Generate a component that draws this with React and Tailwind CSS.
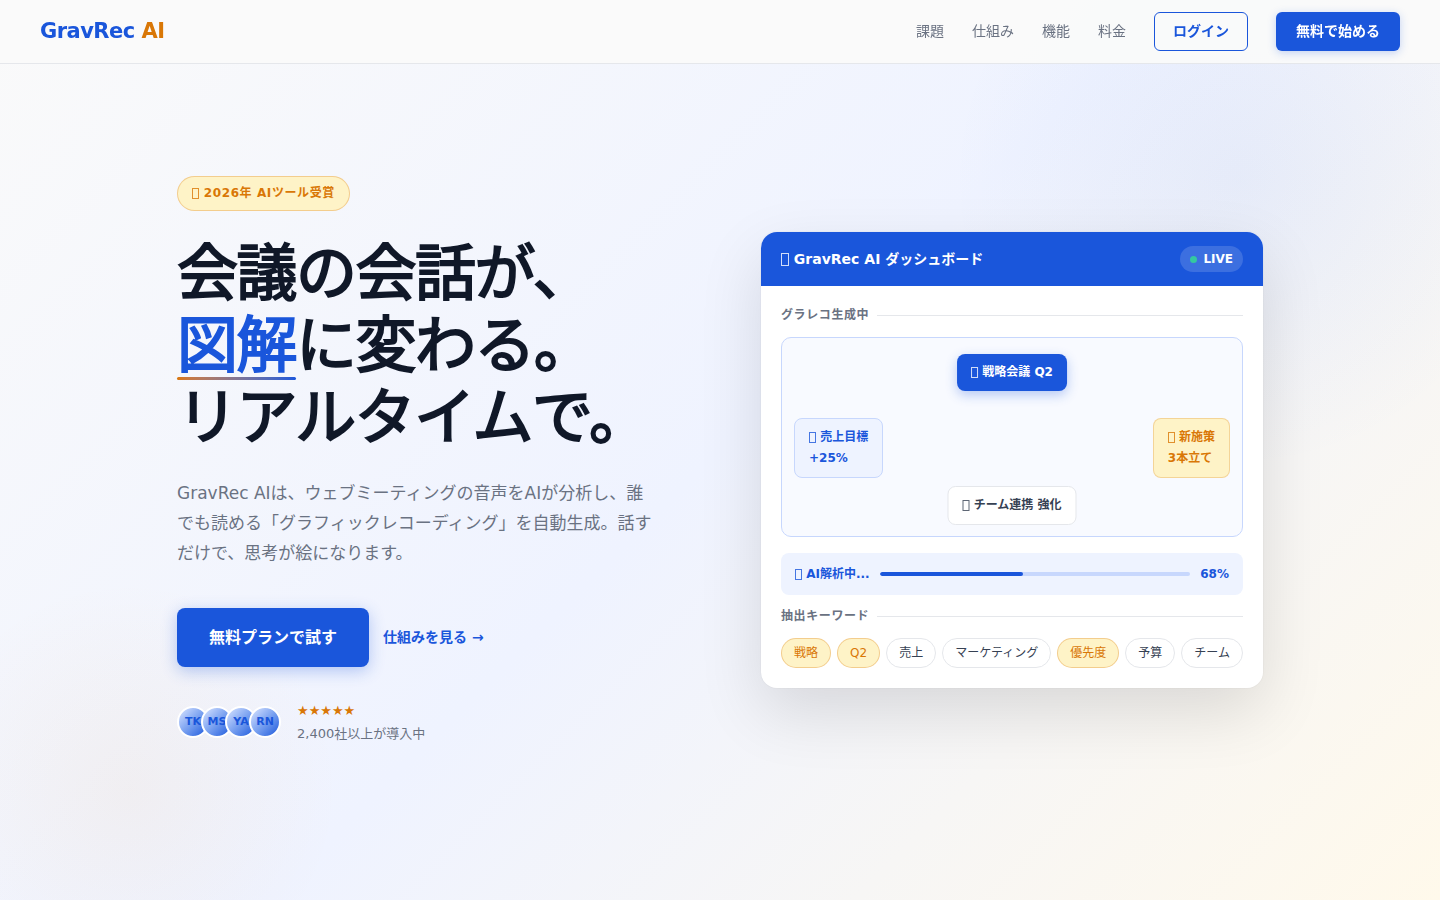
import React from 'react'

const navLinks = ['課題', '仕組み', '機能', '料金']

const members = ['TK', 'MS', 'YA', 'RN']

const keywords = [
  { label: '戦略', hot: true },
  { label: 'Q2', hot: true },
  { label: '売上' },
  { label: 'マーケティング' },
  { label: '優先度', hot: true },
  { label: '予算' },
  { label: 'チーム' },
]

// small outlined box used as the leading mark of labels
function Mark({ large }) {
  return (
    <span
      aria-hidden="true"
      className={`inline-block border border-current opacity-80 ${
        large ? 'h-[13px] w-2 align-[-2px]' : 'h-[11px] w-[7px] align-[-2px]'
      }`}
    />
  )
}

function Navbar() {
  return (
    <header className="fixed inset-x-0 top-0 z-10 flex h-16 items-center justify-between border-b border-gray-200 bg-[#fafafa]/95 px-10">
      <a href="#top" className="text-[21px] leading-[35px] font-bold tracking-tight text-[#1a56db]">
        GravRec <span className="text-[#d97706]">AI</span>
      </a>
      <nav className="flex items-center gap-7 text-sm leading-[23px]">
        {navLinks.map((label) => (
          <a key={label} href={`#${label}`} className="text-gray-500 hover:text-[#1a56db]">
            {label}
          </a>
        ))}
        <button className="rounded-md border border-[#1a56db] px-[18px] py-[7px] font-semibold text-[#1a56db]">
          ログイン
        </button>
        <button className="rounded-md bg-[#1a56db] px-5 py-2 font-semibold text-white shadow-[0_2px_8px_rgba(26,86,219,0.25)]">
          無料で始める
        </button>
      </nav>
    </header>
  )
}

function HeroCopy() {
  return (
    <div>
      <div className="mb-[27px] inline-block rounded-full border border-[#d97706]/30 bg-[#fef3c7] px-3.5 py-1.5 text-xs leading-[21px] font-bold tracking-wider text-[#d97706]">
        <Mark /> 2026年 AIツール受賞
      </div>
      <h1 className="mb-6 text-[61px] leading-[72px] font-normal tracking-tight whitespace-nowrap text-gray-900 [-webkit-text-stroke:2px_currentColor]">
        会議の会話が、
        <br />
        <span className="relative inline-block text-[#1a56db]">
          図解
          <span className="absolute inset-x-0 bottom-0.5 h-[3px] rounded-sm bg-linear-to-r from-[#d97706] to-[#1a56db]" />
        </span>
        に変わる。
        <br />
        リアルタイムで。
      </h1>
      <p className="mb-10 max-w-[480px] text-[17px] leading-[30px] text-gray-500">
        GravRec AIは、ウェブミーティングの音声をAIが分析し、誰でも読める「グラフィックレコーディング」を自動生成。話すだけで、思考が絵になります。
      </p>
      <div className="mb-8 flex items-center gap-3.5">
        <button className="rounded-lg bg-[#1a56db] px-8 py-4 text-base leading-[27px] font-bold text-white shadow-[0_4px_16px_rgba(26,86,219,0.3)]">
          無料プランで試す
        </button>
        <a href="#how" className="text-sm leading-6 font-semibold text-[#1a56db]">
          仕組みを見る →
        </a>
      </div>
      <div className="flex items-center gap-4">
        <div className="flex -space-x-2">
          {members.map((name) => (
            <div
              key={name}
              className="flex size-8 items-center justify-center rounded-full border-2 border-white bg-linear-135 from-[#dbe5fe] to-[#1a56db] text-[11px] leading-[18px] font-bold text-[#1a56db]"
            >
              {name}
            </div>
          ))}
        </div>
        <div>
          <div className="text-[13px] leading-6 text-[#d97706]">★★★★★</div>
          <div className="text-[13px] leading-[22px] text-gray-500">2,400社以上が導入中</div>
        </div>
      </div>
    </div>
  )
}

function SectionLabel({ children }) {
  return (
    <div className="mb-3 flex items-center gap-2 text-xs leading-[19px] font-semibold tracking-wider text-gray-500">
      {children}
      <span className="h-px flex-1 bg-gray-200" />
    </div>
  )
}

// nodes sit freely on the recording canvas
function GraphicCanvas() {
  return (
    <div className="relative mb-4 h-[200px] rounded-[10px] border border-[#c7d7fd] bg-[#f8faff] text-xs leading-[21px] font-semibold whitespace-nowrap">
      <div className="absolute top-4 left-1/2 -translate-x-1/2 rounded-lg bg-[#1a56db] px-3.5 py-2 text-white shadow-[0_4px_12px_rgba(26,86,219,0.3)]">
        <Mark /> 戦略会議 Q2
      </div>
      <div className="absolute top-20 left-3 rounded-lg border border-[#c7d7fd] bg-[#eef3ff] px-3.5 py-2 text-[#1a56db]">
        <Mark /> 売上目標
        <br />
        +25%
      </div>
      <div className="absolute top-20 right-3 rounded-lg border border-[#d97706]/25 bg-[#fef3c7] px-3.5 py-2 text-[#d97706]">
        <Mark /> 新施策
        <br />
        3本立て
      </div>
      <div className="absolute bottom-[11px] left-1/2 -translate-x-1/2 rounded-lg border border-gray-200 bg-white px-3.5 py-2 text-gray-700">
        <Mark /> チーム連携 強化
      </div>
    </div>
  )
}

function Dashboard() {
  return (
    <section className="overflow-hidden rounded-2xl bg-white shadow-[0_24px_64px_rgba(0,0,0,0.12),0_0_0_1px_rgba(0,0,0,0.02)]">
      <div className="flex items-center justify-between bg-[#1a56db] px-5 py-3.5 text-white">
        <h2 className="text-sm leading-6 font-bold">
          <Mark large /> GravRec AI ダッシュボード
        </h2>
        <div className="flex items-center gap-1.5 rounded-full bg-white/15 px-2.5 py-1 text-xs leading-[18px] font-semibold">
          <span className="size-[7px] rounded-full bg-[#34c8a0]" />
          LIVE
        </div>
      </div>
      <div className="p-5">
        <SectionLabel>グラレコ生成中</SectionLabel>
        <GraphicCanvas />
        <div className="mb-3 flex items-center gap-2.5 rounded-lg bg-[#eef3ff] px-3.5 py-2.5 text-xs leading-[22px] font-semibold text-[#1a56db]">
          <span>
            <Mark /> AI解析中...
          </span>
          <div className="h-1 flex-1 overflow-hidden rounded-full bg-[#c7d7fd]">
            <div className="h-full w-[46%] rounded-full bg-[#1a56db]" />
          </div>
          <span>68%</span>
        </div>
        <SectionLabel>抽出キーワード</SectionLabel>
        <div className="flex flex-wrap justify-between gap-x-1 gap-y-1.5">
          {keywords.map(({ label, hot }) => (
            <span
              key={label}
              className={`rounded-full border px-3 py-1 text-xs leading-5 ${
                hot
                  ? 'border-[#d97706]/30 bg-[#fef3c7] text-[#d97706]'
                  : 'border-gray-200 bg-white text-gray-700'
              }`}
            >
              {label}
            </span>
          ))}
        </div>
      </div>
    </section>
  )
}

export default function App() {
  return (
    <div
      id="top"
      lang="ja"
      className="font-['DejaVu_Sans','Noto_Sans_CJK_JP',sans-serif] text-gray-900"
    >
      <Navbar />
      <main className="flex min-h-screen items-center justify-center bg-[radial-gradient(circle_at_1240px_180px,rgba(26,86,219,0.06),transparent_290px),radial-gradient(circle_at_130px_790px,rgba(217,119,6,0.05),transparent_210px),linear-gradient(135deg,#fafafa_0%,#eff3ff_50%,#fff9eb_100%)] px-10 pt-[100px] pb-20">
        <div className="grid w-full max-w-[1086px] grid-cols-2 items-center gap-[82px]">
          <HeroCopy />
          <Dashboard />
        </div>
      </main>
    </div>
  )
}
